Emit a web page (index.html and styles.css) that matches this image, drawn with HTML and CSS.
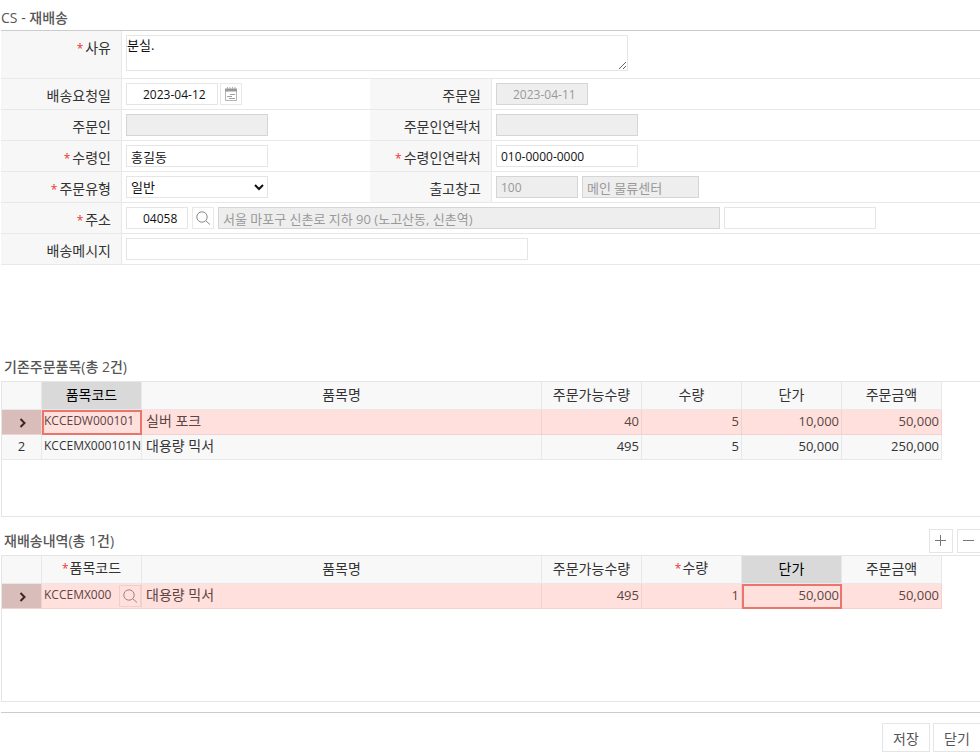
FILE: index.html
```html
<!DOCTYPE html>
<html lang="ko">
<head>
  <meta charset="UTF-8">
  <title>CS - 재배송</title>
  <link rel="stylesheet" href="styles.css">
</head>
<body>

<div class="page">
  <h1 class="title">CS - 재배송</h1>

  <form class="form">
    <div class="row row-memo">
      <label class="label required" for="reason">사유</label>
      <div class="field"><textarea class="memo" id="reason">분실.</textarea></div>
    </div>

    <div class="row row-half">
      <label class="label" for="req-date">배송요청일</label>
      <div class="field field-date">
        <input type="text" class="date" id="req-date" value="2023-04-12">
        <button type="button" class="icon-btn" aria-label="달력">
          <svg width="14" height="14" viewBox="0 0 14 14" fill="none" stroke="#a0a0a0">
            <path d="M1.5 3v10.5h11V3" stroke="#b5b5b5"/>
            <path d="M1 1.5h12v3H1z" fill="#999" stroke="none"/>
            <path d="M3.5 0v2M6 0v2M8.5 0v2M11 0v2" stroke="#b0b0b0"/>
            <path d="M6 7.5h5M3 9.5h5M5 11.5h6"/>
          </svg>
        </button>
      </div>
      <label class="label" for="order-date">주문일</label>
      <div class="field"><input type="text" class="date" id="order-date" value="2023-04-11" disabled></div>
    </div>

    <div class="row row-half">
      <label class="label" for="orderer">주문인</label>
      <div class="field"><input type="text" class="basic" id="orderer" disabled></div>
      <label class="label" for="orderer-tel">주문인연락처</label>
      <div class="field"><input type="text" class="basic" id="orderer-tel" disabled></div>
    </div>

    <div class="row row-half">
      <label class="label required" for="receiver">수령인</label>
      <div class="field"><input type="text" class="basic kor" id="receiver" value="홍길동"></div>
      <label class="label required" for="receiver-tel">수령인연락처</label>
      <div class="field"><input type="text" class="basic" id="receiver-tel" value="010-0000-0000"></div>
    </div>

    <div class="row row-half">
      <label class="label required" for="order-type">주문유형</label>
      <div class="field">
        <select class="basic kor" id="order-type"><option>일반</option></select>
      </div>
      <label class="label" for="wh-code">출고창고</label>
      <div class="field">
        <input type="text" class="wh-code" id="wh-code" value="100" disabled>
        <input type="text" class="wh-name kor" aria-label="출고창고명" value="메인 물류센터" disabled>
      </div>
    </div>

    <div class="row">
      <label class="label required" for="zip">주소</label>
      <div class="field">
        <input type="text" class="zip" id="zip" value="04058">
        <button type="button" class="icon-btn" aria-label="주소 검색">
          <svg width="16" height="16" viewBox="0 0 16 16" fill="none" stroke="#8a8a8a">
            <circle cx="7" cy="7" r="5.2"/>
            <path d="M10.8 10.8L15 14.5"/>
          </svg>
        </button>
        <input type="text" class="addr kor" aria-label="기본주소" value="서울 마포구 신촌로 지하 90 (노고산동, 신촌역)" disabled>
        <input type="text" class="addr-detail kor" aria-label="상세주소">
      </div>
    </div>

    <div class="row">
      <label class="label" for="message">배송메시지</label>
      <div class="field"><input type="text" class="message kor" id="message"></div>
    </div>
  </form>

  <section class="origin">
    <div class="section-head">
      <h2 class="section-title">기존주문품목(총 2건)</h2>
    </div>
    <div class="grid-box grid-origin">
      <table class="grid">
        <colgroup>
          <col class="col-no"><col class="col-code"><col class="col-name">
          <col class="col-num"><col class="col-num"><col class="col-num"><col class="col-num">
        </colgroup>
        <thead>
          <tr>
            <th></th><th class="on">품목코드</th><th>품목명</th><th>주문가능수량</th>
            <th>수량</th><th>단가</th><th>주문금액</th>
          </tr>
        </thead>
        <tbody>
          <tr class="selected">
            <td class="no"><svg width="8" height="10" viewBox="0 0 8 10" fill="none" stroke="#3a2524" stroke-width="2"><path d="M1.5 1l4 4-4 4"/></svg></td>
            <td class="code focus">KCCEDW000101</td>
            <td class="name">실버 포크</td>
            <td class="num">40</td><td class="num">5</td><td class="num">10,000</td><td class="num">50,000</td>
          </tr>
          <tr>
            <td class="no">2</td>
            <td class="code">KCCEMX000101N</td>
            <td class="name">대용량 믹서</td>
            <td class="num">495</td><td class="num">5</td><td class="num">50,000</td><td class="num">250,000</td>
          </tr>
        </tbody>
      </table>
    </div>
  </section>

  <section>
    <div class="section-head">
      <h2 class="section-title">재배송내역(총 1건)</h2>
      <div class="tools">
        <button type="button" class="tool-btn" aria-label="행 추가">
          <svg width="12" height="12" viewBox="0 0 12 12" stroke="#777"><path d="M0 5.5h11M5.5 0v11"/></svg>
        </button>
        <button type="button" class="tool-btn" aria-label="행 삭제">
          <svg width="12" height="12" viewBox="0 0 12 12" stroke="#777"><path d="M0 5.5h11"/></svg>
        </button>
      </div>
    </div>
    <div class="grid-box grid-resend">
      <table class="grid">
        <colgroup>
          <col class="col-no"><col class="col-code"><col class="col-name">
          <col class="col-num"><col class="col-num"><col class="col-num"><col class="col-num">
        </colgroup>
        <thead>
          <tr>
            <th></th><th class="required">품목코드</th><th>품목명</th><th>주문가능수량</th>
            <th class="required">수량</th><th class="on">단가</th><th>주문금액</th>
          </tr>
        </thead>
        <tbody>
          <tr class="selected">
            <td class="no"><svg width="8" height="10" viewBox="0 0 8 10" fill="none" stroke="#3a2524" stroke-width="2"><path d="M1.5 1l4 4-4 4"/></svg></td>
            <td class="code code-search">
              <div class="code-wrap">
                <span class="code-text">KCCEMX000</span>
                <button type="button" class="icon-btn" aria-label="품목 검색">
                  <svg width="16" height="16" viewBox="0 0 16 16" fill="none" stroke="#a87f7c">
                    <circle cx="7" cy="7" r="5.2"/>
                    <path d="M10.8 10.8L15 14.5"/>
                  </svg>
                </button>
              </div>
            </td>
            <td class="name">대용량 믹서</td>
            <td class="num">495</td><td class="num">1</td><td class="num focus">50,000</td><td class="num">50,000</td>
          </tr>
        </tbody>
      </table>
    </div>
  </section>

  <div class="footer">
    <button type="button" class="btn">저장</button>
    <button type="button" class="btn">닫기</button>
  </div>
</div>

</body>
</html>
```

FILE: styles.css
```css
* {
  box-sizing: border-box;
}

body {
  margin: 0;
  overflow: hidden;
  background: #fff;
  color: #333;
  font-family: "Open Sans", "Noto Sans CJK KR", sans-serif;
  font-size: 14px;
  line-height: 20px;
}

input, select, textarea, button {
  font-family: inherit;
  font-size: 12px;
  margin: 0;
}

.page {
  margin: 0 -1px 0 1px;
}

.title, .section-title {
  margin: 0;
  font-size: 14px;
  font-weight: 500;
  color: #555;
}

.title {
  padding: 8px 0 2px;
}

/* form */
.form {
  border-top: 1px solid #ccc;
}

.row {
  display: grid;
  grid-template-columns: 121px 1fr;
  border-bottom: 1px solid #e8e8e8;
}

.row-half {
  grid-template-columns: 121px 248px 122px 1fr;
}

.row-memo .field {
  padding-bottom: 7px;
}

.label {
  padding: 7px 10px 0 0;
  border-right: 1px solid #e8e8e8;
  background: #f7f7f7;
  line-height: 20px;
  text-align: right;
}

.required::before {
  content: "*";
  margin-right: 2px;
  color: #e33;
  font-size: 12px;
}

.field {
  display: flex;
  gap: 4px;
  padding: 4px;
}

.field-date {
  gap: 2px;
}

.field input, .field select, .memo {
  height: 22px;
  padding: 0 4px;
  border: 1px solid #e5e5e5;
  border-radius: 0;
  background: #fff;
  color: #111;
}

.field .kor {
  font-size: 13px;
}

.field select {
  padding: 0;
}

.field input:disabled {
  border-color: #d5d5d5;
  background: #eee;
  color: #999;
}

.field .memo {
  display: block;
  width: 502px;
  height: 36px;
  padding: 0;
  font-size: 13px;
  line-height: 18px;
}

.basic { width: 142px; }
.wh-code { width: 82px; }
.wh-name { width: 117px; }
.addr { width: 502px; }
.addr-detail { width: 152px; }
.message { width: 402px; }

.field .date {
  width: 92px;
  padding-left: 16px;
}

.field .zip {
  width: 62px;
  padding-left: 16px;
}

.icon-btn {
  display: flex;
  align-items: center;
  justify-content: center;
  flex: none;
  width: 22px;
  height: 22px;
  padding: 0;
  border: 1px solid #e8e8e8;
  background: none;
}

/* item grids */
.origin {
  margin-top: 86px;
}

.section-head {
  display: flex;
  align-items: center;
  justify-content: space-between;
  height: 30px;
  padding: 2px 0 0 3px;
}

.tools {
  display: flex;
  gap: 4px;
}

.tool-btn {
  display: flex;
  align-items: center;
  justify-content: center;
  width: 24px;
  height: 24px;
  padding: 0;
  border: 1px solid #e5e5e5;
  background: #fff;
}

.grid-box {
  border: 1px solid #e5e5e5;
}

.grid-origin {
  height: 136px;
  margin-bottom: 8px;
}

.grid-resend {
  height: 147px;
}

.grid {
  width: 940px;
  border-collapse: separate;
  border-spacing: 0;
  table-layout: fixed;
}

.col-no { width: 40px; }
.col-code { width: 100px; }
.col-name { width: 400px; }
.col-num { width: 100px; }

.grid th, .grid td {
  overflow: hidden;
  padding: 0 0 2px;
  border-right: 1px solid #e8e8e8;
  border-bottom: 1px solid #e8e8e8;
  background: #f8f8f8;
  white-space: nowrap;
}

.grid th {
  height: 28px;
  font-weight: normal;
}

.grid th.required::before {
  margin-right: 1px;
}

.grid .on {
  background: #d9d9d9;
  color: #000;
}

.grid td {
  height: 25px;
  line-height: 20px;
}

.grid .no {
  font-size: 13px;
  text-align: center;
}

.grid .no svg {
  margin-left: 3px;
  vertical-align: middle;
}

.grid .code {
  padding-left: 2px;
  font-size: 12px;
}

.grid .name {
  padding-left: 4px;
}

.grid .num {
  padding-right: 2px;
  font-size: 13px;
  text-align: right;
}

.grid .selected td {
  border-color: #f0d3d0;
  background: #ffe0dd;
  color: #5c4543;
}

.grid .selected .no {
  background: #d9bdbb;
}

.grid .focus {
  outline: 2px solid #e9766c;
  outline-offset: -2px;
}

.grid .code-search {
  padding-bottom: 0;
}

.code-wrap {
  display: flex;
  align-items: center;
  height: 24px;
}

.code-text {
  flex: 1;
  padding-bottom: 2px;
}

.code-wrap .icon-btn {
  border-color: #ecd0ce;
}

.footer {
  display: flex;
  justify-content: flex-end;
  gap: 3px;
  margin-top: 10px;
  padding-top: 10px;
  border-top: 1px solid #ccc;
}

.btn {
  width: 48px;
  height: 29px;
  padding: 0;
  border: 1px solid #e5e5e5;
  background: #fff;
  color: #555;
  font-size: 14px;
}
```
